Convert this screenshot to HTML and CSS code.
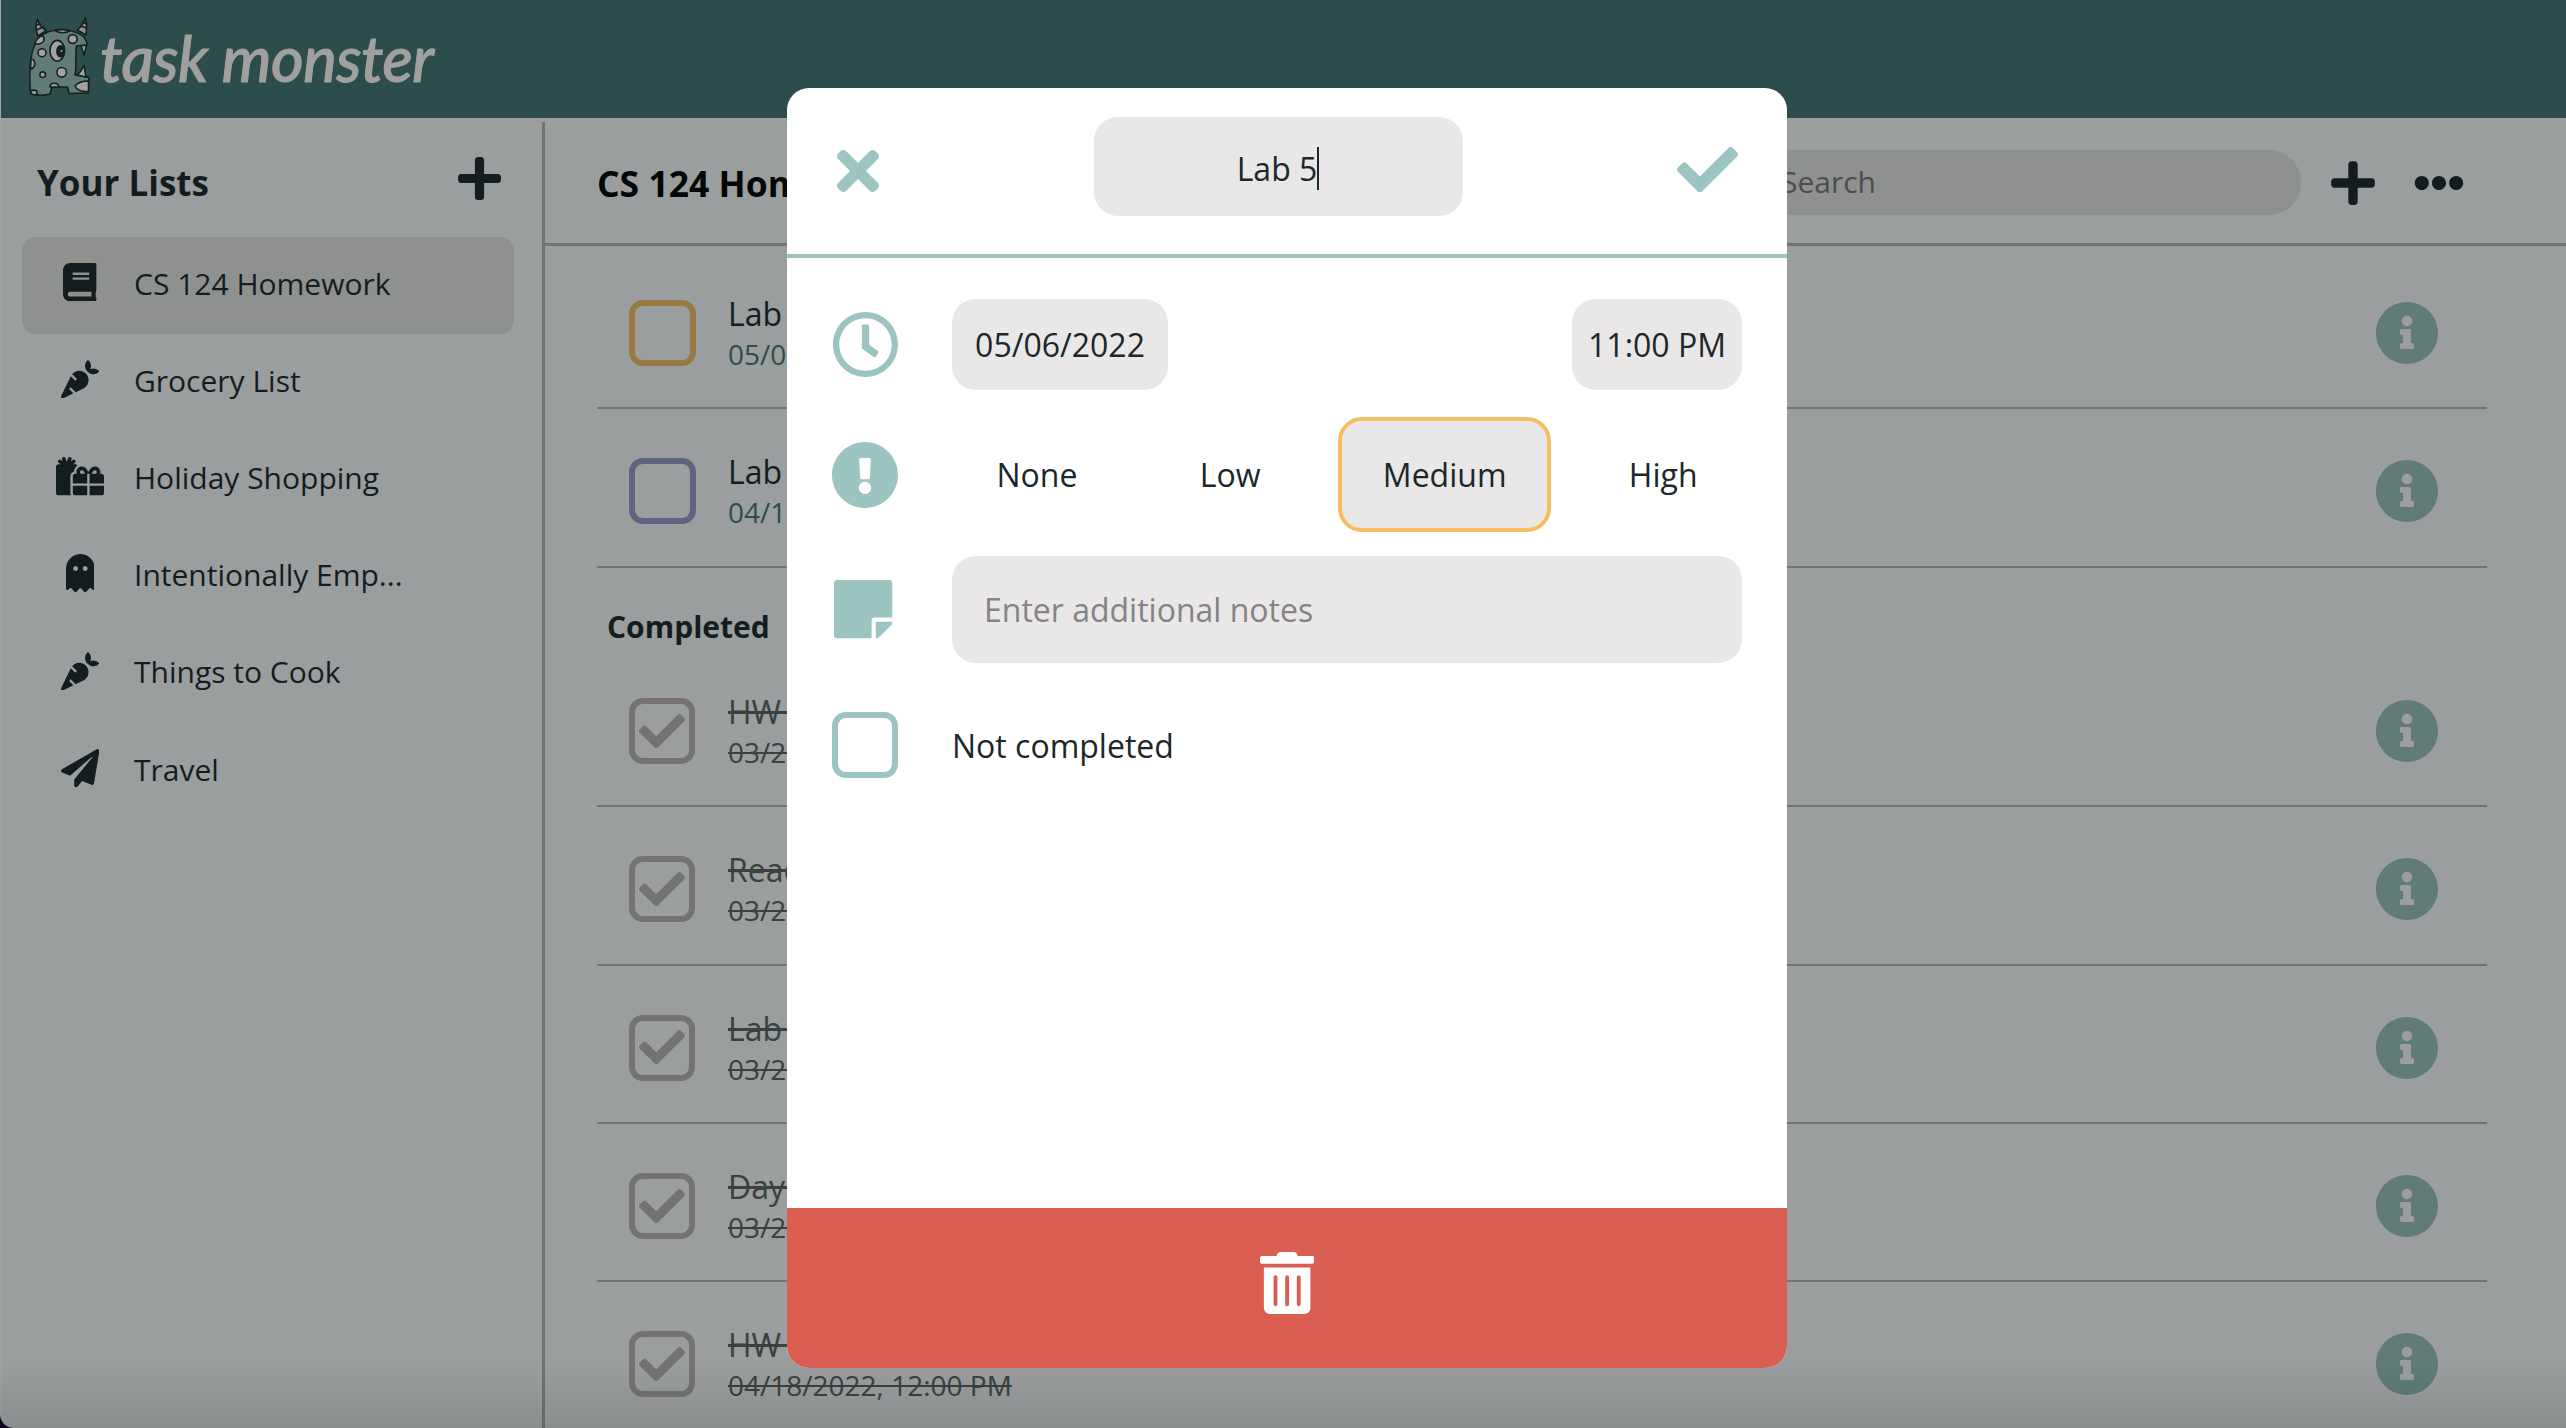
FILE: index.html
```html
<!DOCTYPE html>
<html lang="en">
<head>
<meta charset="utf-8">
<title>Task Monster</title>
<link rel="stylesheet" href="styles.css">
</head>
<body>
<svg class="sprite" aria-hidden="true">
  <symbol id="book" viewBox="0 0 448 512"><path d="M448 360V24c0-13.3-10.7-24-24-24H96C43 0 0 43 0 96v320c0 53 43 96 96 96h328c13.3 0 24-10.7 24-24v-16c0-7.5-3.5-14.3-8.9-18.7-4.2-15.4-4.2-59.3 0-74.7 5.4-4.3 8.9-11.1 8.9-18.6zM128 134c0-3.3 2.7-6 6-6h212c3.3 0 6 2.7 6 6v20c0 3.3-2.7 6-6 6H134c-3.3 0-6-2.7-6-6v-20zm0 64c0-3.3 2.7-6 6-6h212c3.3 0 6 2.7 6 6v20c0 3.3-2.7 6-6 6H134c-3.3 0-6-2.7-6-6v-20zm253.4 250H96c-17.7 0-32-14.3-32-32 0-17.6 14.4-32 32-32h285.4c-1.9 17.1-1.9 46.9 0 64z"/></symbol>
  <symbol id="carrot" viewBox="0 0 512 512"><path d="M298.2 156.6c-52.7-25.7-114.5-10.5-150.2 32.8l55.2 55.2c6.3 6.3 6.3 16.4 0 22.6-3.1 3.1-7.2 4.7-11.3 4.7s-8.2-1.6-11.3-4.7L130.4 217 2.3 479.7c-2.9 6-3.1 13.3 0 19.7 5.4 11.1 18.9 15.7 30 10.3l133.6-65.2-49.2-49.2c-6.3-6.2-6.3-16.4 0-22.6 6.3-6.2 16.4-6.2 22.6 0l57 57 102-49.8c24-11.7 44.5-31.3 57.1-57.1 30.1-61.7 4.5-136.1-57.2-166.2zm92.1-34.9C409.8 81 399.7 32.9 360 0c-50.3 41.7-52.5 107.5-7.9 151.9l8 8c44.4 44.6 110.3 42.4 151.9-7.9-32.9-39.7-81-49.8-121.7-30.3z"/></symbol>
  <symbol id="gifts" viewBox="0 0 640 512"><path d="M240.6 194.1c1.9-30.8 17.3-61.2 44-79.8C279.4 103.5 268.7 96 256 96h-29.4l30.7-22c7.2-5.1 8.9-15.1 3.7-22.3l-9.3-13c-5.1-7.2-15.1-8.9-22.3-3.7l-32 22.9 11.5-30.6c3.1-8.3-1.1-17.5-9.4-20.6l-15-5.6c-8.3-3.1-17.5 1.1-20.6 9.4l-19.9 53-19.9-53.1C121 2.1 111.8-2.1 103.5 1l-15 5.6C80.2 9.7 76 19 79.2 27.2l11.5 30.6L58.6 35c-7.2-5.1-17.2-3.5-22.3 3.7l-9.3 13c-5.1 7.2-3.5 17.2 3.7 22.3l30.7 22H32c-17.7 0-32 14.3-32 32v352c0 17.7 14.3 32 32 32h168.9c-5.5-9.5-8.9-20.3-8.9-32V256c0-29.9 20.8-55 48.6-61.9zM224 480c0 17.7 14.3 32 32 32h160V384H224v96zm224 32h160c17.7 0 32-14.3 32-32v-96H448v128zm160-288h-20.4c2.6-7.6 4.4-15.5 4.4-23.8 0-35.5-27-72.2-72.1-72.2-48.1 0-75.9 47.7-87.9 75.3-12.1-27.6-39.9-75.3-87.9-75.3-45.1 0-72.1 36.7-72.1 72.2 0 8.3 1.7 16.2 4.4 23.8H256c-17.7 0-32 14.3-32 32v96h192V224h15.3l.7-.2.7.2H448v128h192v-96c0-17.7-14.3-32-32-32zm-272 0c-2.7-1.4-5.1-3-7.2-4.8-7.3-6.4-8.8-13.8-8.8-19 0-9.7 6.4-24.2 24.1-24.2 18.7 0 35.6 27.4 44.5 48H336zm199.2-4.8c-2.1 1.8-4.5 3.4-7.2 4.8h-52.6c8.8-20.3 25.8-48 44.5-48 17.7 0 24.1 14.5 24.1 24.2 0 5.2-1.5 12.6-8.8 19z"/></symbol>
  <symbol id="ghost" viewBox="0 0 384 512"><path d="M186.1.09C81.01 3.24 0 94.92 0 200.05v263.92c0 14.26 17.23 21.39 27.31 11.31l24.92-18.53c6.66-4.95 16-3.99 21.51 2.21l42.95 48.35c6.25 6.25 16.38 6.25 22.63 0l40.72-45.85c6.37-7.17 17.56-7.17 23.92 0l40.72 45.85c6.25 6.25 16.38 6.25 22.63 0l42.95-48.35c5.51-6.2 14.85-7.17 21.51-2.21l24.92 18.53c10.08 10.08 27.31 2.94 27.31-11.31V192C384 84 294.83-3.17 186.1.09zM128 224c-17.67 0-32-14.33-32-32s14.33-32 32-32 32 14.33 32 32-14.33 32-32 32zm128 0c-17.67 0-32-14.33-32-32s14.33-32 32-32 32 14.33 32 32-14.33 32-32 32z"/></symbol>
  <symbol id="plane" viewBox="0 0 512 512"><path d="M476 3.2L12.5 270.6c-18.1 10.4-15.8 35.6 2.2 43.2L121 358.4l287.3-253.2c5.5-4.9 13.3 2.6 8.6 8.3L176 407v80.5c0 23.6 28.5 32.9 42.5 15.8L282 426l124.6 52.2c14.2 6 30.4-2.9 33-18.2l72-432C515 7.8 493.3-6.8 476 3.2z"/></symbol>
  <symbol id="plus" viewBox="0 0 448 512"><path d="M416 208H272V64c0-17.67-14.33-32-32-32h-32c-17.67 0-32 14.33-32 32v144H32c-17.67 0-32 14.33-32 32v32c0 17.67 14.33 32 32 32h144v144c0 17.67 14.33 32 32 32h32c17.67 0 32-14.33 32-32V304h144c17.67 0 32-14.33 32-32v-32c0-17.67-14.33-32-32-32z"/></symbol>
  <symbol id="dots" viewBox="0 0 512 512"><path d="M328 256c0 39.8-32.2 72-72 72s-72-32.2-72-72 32.2-72 72-72 72 32.2 72 72zm104-72c-39.8 0-72 32.2-72 72s32.2 72 72 72 72-32.2 72-72-32.2-72-72-72zm-352 0c-39.8 0-72 32.2-72 72s32.2 72 72 72 72-32.2 72-72-32.2-72-72-72z"/></symbol>
  <symbol id="info" viewBox="8 8 496 496"><path d="M256 8C119.043 8 8 119.083 8 256c0 136.997 111.043 248 248 248s248-111.003 248-248C504 119.083 392.957 8 256 8zm0 110c23.196 0 42 18.804 42 42s-18.804 42-42 42-42-18.804-42-42 18.804-42 42-42zm56 254c0 6.627-5.373 12-12 12h-88c-6.627 0-12-5.373-12-12v-24c0-6.627 5.373-12 12-12h12v-64h-12c-6.627 0-12-5.373-12-12v-24c0-6.627 5.373-12 12-12h64c6.627 0 12 5.373 12 12v100h12c6.627 0 12 5.373 12 12v24z"/></symbol>
  <symbol id="check" viewBox="0 65 512 382"><path d="M173.898 439.404l-166.4-166.4c-9.997-9.997-9.997-26.206 0-36.204l36.203-36.204c9.997-9.998 26.207-9.998 36.204 0L192 312.69 432.095 72.596c9.997-9.997 26.207-9.997 36.204 0l36.203 36.204c9.997 9.997 9.997 26.206 0 36.204l-294.4 294.401c-9.998 9.997-26.207 9.997-36.204-.001z"/></symbol>
  <symbol id="times" viewBox="0 80 352 352"><path d="M242.72 256l100.07-100.07c12.28-12.28 12.28-32.19 0-44.48l-22.24-22.24c-12.28-12.28-32.19-12.28-44.48 0L176 189.28 75.93 89.21c-12.28-12.28-32.19-12.28-44.48 0L9.21 111.45c-12.28 12.28-12.28 32.19 0 44.48L109.28 256 9.21 356.07c-12.28 12.28-12.28 32.19 0 44.48l22.24 22.24c12.28 12.28 32.2 12.28 44.48 0L176 322.72l100.07 100.07c12.28 12.28 32.2 12.28 44.48 0l22.24-22.24c12.28-12.28 12.28-32.19 0-44.48L242.72 256z"/></symbol>
  <symbol id="clock" viewBox="8 8 496 496"><path d="M256 8C119 8 8 119 8 256s111 248 248 248 248-111 248-248S393 8 256 8zm0 448c-110.5 0-200-89.5-200-200S145.5 56 256 56s200 89.5 200 200-89.5 200-200 200zm61.8-104.4l-84.9-61.7c-3.1-2.3-4.9-5.9-4.9-9.7V116c0-6.6 5.4-12 12-12h32c6.6 0 12 5.4 12 12v141.7l66.8 48.6c5.4 3.9 6.5 11.4 2.6 16.8L334.6 349c-3.9 5.3-11.4 6.5-16.8 2.6z"/></symbol>
  <symbol id="priority" viewBox="8 8 496 496"><path d="M504 256c0 136.997-111.043 248-248 248S8 392.997 8 256C8 119.083 119.043 8 256 8s248 111.083 248 248zm-248 50c-25.405 0-46 20.595-46 46s20.595 46 46 46 46-20.595 46-46-20.595-46-46-46zm-43.673-165.346l7.418 136c.347 6.364 5.609 11.346 11.982 11.346h48.546c6.373 0 11.635-4.982 11.982-11.346l7.418-136c.375-6.874-5.098-12.654-11.982-12.654h-63.383c-6.884 0-12.356 5.78-11.981 12.654z"/></symbol>
  <symbol id="note" viewBox="0 32 448 448"><path d="M312 320h136V56c0-13.3-10.7-24-24-24H24C10.7 32 0 42.7 0 56v400c0 13.3 10.7 24 24 24h264V344c0-13.2 10.8-24 24-24zm129 55l-98 98c-4.5 4.5-10.6 7-17 7h-6V352h128v6.1c0 6.3-2.5 12.4-7 16.9z"/></symbol>
  <symbol id="trash" viewBox="0 0 448 512"><path d="M32 464a48 48 0 0 0 48 48h288a48 48 0 0 0 48-48V128H32zm272-256a16 16 0 0 1 32 0v224a16 16 0 0 1-32 0zm-96 0a16 16 0 0 1 32 0v224a16 16 0 0 1-32 0zm-96 0a16 16 0 0 1 32 0v224a16 16 0 0 1-32 0zM432 32H312l-9.4-18.7A24 24 0 0 0 281.1 0H166.8a23.72 23.72 0 0 0-21.4 13.3L136 32H16A16 16 0 0 0 0 48v32a16 16 0 0 0 16 16h416a16 16 0 0 0 16-16V48a16 16 0 0 0-16-16z"/></symbol>
</svg>

<div class="app">
  <header class="topbar">
    <svg class="monster" viewBox="0 0 62 86">
      <g stroke="#14211f" stroke-width="1.6" stroke-linejoin="round" stroke-linecap="round">
        <path fill="#8f9191" d="M9.300 4c1.500 6 5 9 9 11.500L10 21C7.500 15 7.500 9 9.300 4zM57.300 2.500c1.500 6 1.500 12 .5 17.500l-8.500-5c4-3 6.500-7 8-12.500z"/>
        <path fill="none" d="M8.500 10l4-1M8.500 15l6.500-3M52.500 11l6 2M54.500 7.500l4 1"/>
        <path fill="#617b78" d="M2.500 78C1 60 2 40 7 29c6-12 17-14.500 27-14 13 .3 25 5 25 15l-10.500 1C47 40 49 50 47 60l14 2.500L60 78l-19 .5-1.500-6.500H24l-2 7c-6 1.500-14 1.500-19.500-1z"/>
        <path fill="#a2a2a2" d="M27 15.500c4-1 10-1 15 0-4 3-11 3-15 0zM6.500 29c2-5 5-8 8.500-8 3 5-1 9-8.500 8zM3 44c5 0 5 9-.5 10zM22 72c0-5 8-5 9 0zM3 76c4-2 8 0 5 4l-5-1zM47 71c3-4 8-5 13.500-5v10.500C54 77 49 75 47 71zM53 30.500h5.500L56 40zM49.500 60c3-3 5-6 6.500-9.500L58 62z"/>
        <g fill="#a2a2a2">
          <circle cx="44.700" cy="24" r="4.400"/>
          <circle cx="14" cy="37.700" r="4"/>
          <circle cx="14.700" cy="59.700" r="2.800"/>
          <circle cx="33.700" cy="57.300" r="4.800"/>
          <ellipse cx="29.300" cy="35.700" rx="7.300" ry="10.300"/>
        </g>
        <ellipse cx="32.500" cy="36.300" rx="3.600" ry="5.500" fill="#14211f"/>
        <circle cx="33.500" cy="36" r="1" fill="#a2a2a2" stroke="none"/>
      </g>
    </svg>
    <span class="wordmark">task monster</span>
  </header>
  <div class="columns">
    <nav class="sidebar">
      <div class="sidebar-head"><h2>Your Lists</h2><svg><use href="#plus"/></svg></div>
      <ul class="lists">
        <li class="active"><span class="glyph"><svg viewBox="0 0 448 512"><use href="#book"/></svg></span>CS 124 Homework</li>
        <li><span class="glyph"><svg viewBox="0 0 512 512"><use href="#carrot"/></svg></span>Grocery List</li>
        <li><span class="glyph"><svg viewBox="0 0 640 512"><use href="#gifts"/></svg></span>Holiday Shopping</li>
        <li><span class="glyph"><svg viewBox="0 0 384 512"><use href="#ghost"/></svg></span>Intentionally Emp...</li>
        <li><span class="glyph"><svg viewBox="0 0 512 512"><use href="#carrot"/></svg></span>Things to Cook</li>
        <li><span class="glyph"><svg viewBox="0 0 512 512"><use href="#plane"/></svg></span>Travel</li>
      </ul>
    </nav>
    <main class="content">
      <div class="content-head">
        <h1>CS 124 Homework</h1>
        <div class="search">Search</div>
        <svg class="add"><use href="#plus"/></svg>
        <svg class="more"><use href="#dots"/></svg>
      </div>
      <div class="tasks">
        <div class="task"><span class="box medium"></span><div class="text"><p>Lab 5</p><small>05/06/2022, 11:00 PM</small></div><svg class="info"><use href="#info"/></svg></div>
        <div class="task"><span class="box low"></span><div class="text"><p>Lab 4</p><small>04/18/2022, 11:00 PM</small></div><svg class="info"><use href="#info"/></svg></div>
        <h3>Completed</h3>
        <div class="task done"><span class="box"><svg><use href="#check"/></svg></span><div class="text"><p>HW 2</p><small>03/28/2022, 12:00 PM</small></div><svg class="info"><use href="#info"/></svg></div>
        <div class="task done"><span class="box"><svg><use href="#check"/></svg></span><div class="text"><p>Reading</p><small>03/28/2022, 12:00 PM</small></div><svg class="info"><use href="#info"/></svg></div>
        <div class="task done"><span class="box"><svg><use href="#check"/></svg></span><div class="text"><p>Lab 3</p><small>03/28/2022, 12:00 PM</small></div><svg class="info"><use href="#info"/></svg></div>
        <div class="task done"><span class="box"><svg><use href="#check"/></svg></span><div class="text"><p>Day 1</p><small>03/28/2022, 12:00 PM</small></div><svg class="info"><use href="#info"/></svg></div>
        <div class="task done"><span class="box"><svg><use href="#check"/></svg></span><div class="text"><p>HW 3</p><small>04/18/2022, 12:00 PM</small></div><svg class="info"><use href="#info"/></svg></div>
      </div>
    </main>
  </div>
</div>
<div class="dock-shade"></div>
<div class="corner"></div>

<section class="modal">
  <header class="modal-head">
    <svg class="close"><use href="#times"/></svg>
    <div class="field name">Lab 5<i class="caret"></i></div>
    <svg class="confirm"><use href="#check"/></svg>
  </header>
  <div class="modal-body">
    <div class="row when"><span class="lead"><svg class="i-clock"><use href="#clock"/></svg></span><div class="values"><span class="field">05/06/2022</span><span class="field time">11:00 PM</span></div></div>
    <div class="row level"><span class="lead"><svg class="i-priority"><use href="#priority"/></svg></span><div class="values"><span class="choice">None</span><span class="choice">Low</span><span class="choice picked">Medium</span><span class="choice">High</span></div></div>
    <div class="row notes"><span class="lead"><svg class="i-note"><use href="#note"/></svg></span><div class="field memo">Enter additional notes</div></div>
    <div class="row status"><span class="lead"><span class="box"></span></span><span>Not completed</span></div>
  </div>
  <footer class="modal-foot"><svg><use href="#trash"/></svg></footer>
</section>
</body>
</html>
```
FILE: styles.css
```css
* { box-sizing: border-box; }
html, body { height: 100%; }
body {
  margin: 0;
  overflow: hidden;
  background: #9a9e9e;
  color: #141d1e;
  font-family: "Open Sans", "Noto Sans", sans-serif;
  font-size: 32px;
}
h1, h2, h3, p, ul { margin: 0; padding: 0; }
svg { display: block; fill: currentColor; flex: none; }
.sprite { position: absolute; width: 0; height: 0; }

.app { display: flex; flex-direction: column; height: 1428px; overflow: hidden; border-left: 1px solid rgba(255, 255, 255, .08); }
.topbar { display: flex; flex: none; height: 118px; padding-left: 27px; background: #2c4d4c; }
.monster { width: 62px; height: 86px; margin-top: 15px; }
.wordmark {
  margin: 8px 0 0 10px;
  color: #a0a0a0;
  font: italic 500 63px/100px Lato, sans-serif;
  letter-spacing: -.5px;
  white-space: nowrap;
  -webkit-text-stroke: 1px #a0a0a0;
}
.columns { display: flex; flex: 1; min-height: 0; padding-top: 4px; }

.sidebar { flex: none; width: 544px; border-right: 3px solid #747274; }
.sidebar-head { display: flex; justify-content: space-between; height: 115px; padding: 31px 41px 0 36px; }
.sidebar-head h2 { font-size: 35px; line-height: 60px; }
.sidebar-head svg { width: 43px; height: 49px; margin-top: 1px; }
.lists { display: flex; flex-direction: column; padding: 0 28px 0 21px; list-style: none; }
.lists li { display: flex; align-items: center; height: 97.2px; padding-bottom: 5px; border-radius: 14px; font-size: 30px; }
.lists .active { background: #8f918f; }
.glyph { display: flex; justify-content: center; width: 116px; margin: 0 -4px 2px 0; }
.glyph svg { height: 38.4px; }

.content { flex: 1; min-width: 0; }
.content-head { display: flex; align-items: center; height: 124px; padding: 0 102px 0 52px; border-bottom: 3px solid #747274; }
.content-head h1 { margin-right: auto; color: #050606; font-size: 35.5px; }
.search { width: 581px; height: 65px; padding-left: 61px; border-radius: 32px; background: #8f918f; color: #4c4e4e; font-size: 30px; line-height: 64px; }
.add { width: 44px; height: 50px; margin-left: 30px; }
.more { width: 50px; height: 50px; margin-left: 39px; }

.tasks { padding: 5px 79px 0 52px; }
.task { display: flex; align-items: center; height: 158.25px; padding: 8px 49px 0 32px; border-bottom: 2px solid #747274; }
.box { display: flex; flex: none; align-items: center; justify-content: center; width: 66px; height: 66px; border: 6px solid #747274; border-radius: 14px; color: #747274; }
.box.medium { width: 67px; border-color: #997a42; }
.box.low { width: 67px; border-color: #60657f; }
.box svg { width: 46px; height: 34.3px; }
.text { flex: 1; margin: 2px 0 0 33px; line-height: 40px; }
.box.medium + .text, .box.low + .text { margin-left: 32px; }
.text small { display: block; color: #2c4d4a; font-size: 28px; }
.info { width: 62px; height: 62px; color: #607b78; }
.done .text p, .done .text small { width: max-content; color: #39423f; text-decoration: line-through; }
.tasks h3 { height: 81.5px; padding-left: 10px; font-size: 30px; line-height: 117px; }

.dock-shade { position: absolute; inset: auto 0 0 0; height: 68px; background: linear-gradient(rgba(0, 0, 0, 0), rgba(0, 0, 0, .1)); }
.corner { position: absolute; left: 0; bottom: 0; width: 14px; height: 14px; background: radial-gradient(circle at 14px 0, rgba(0, 0, 0, 0) 13.5px, #0c0420 14.5px); }

.modal {
  position: absolute;
  left: 787px;
  top: 88px;
  display: flex;
  flex-direction: column;
  width: 1000px;
  height: 1280px;
  overflow: hidden;
  border-radius: 22px;
  background: #fff;
  color: #1b2729;
}
.modal-head { display: flex; align-items: center; justify-content: space-between; height: 170px; padding: 0 49px 1px 50px; border-bottom: 4px solid #9cc4c1; color: #9cc4c1; }
.close { width: 42px; height: 42px; }
.confirm { width: 61px; height: 45.5px; margin-top: -1px; }
.field { display: block; border-radius: 24px; background: #eae7e8; color: #1b2729; }
.name { display: flex; align-items: center; justify-content: center; width: 369px; height: 99px; margin: -8px 0 0; padding-top: 4px; }
.caret { width: 2px; height: 43px; background: #1b2729; }
.modal-body { display: flex; flex: 1; flex-direction: column; padding: 41px 45px 0; }
.row { display: flex; align-items: center; }
.lead { flex: none; width: 120px; color: #9cc4c1; }
.values { display: flex; flex: 1; justify-content: space-between; }
.i-clock { width: 65px; height: 65px; margin-left: 1px; }
.i-priority { width: 66px; height: 66px; }
.i-note { width: 58.5px; height: 58.5px; margin-left: 2px; }
.when .field { width: 216px; height: 91px; line-height: 91px; text-align: center; }
.when .time { width: 170px; }
.level { margin-top: 27px; }
.choice { height: 115px; padding: 0 40.5px; border: 4px solid transparent; border-radius: 24px; line-height: 107px; }
.picked { border-color: #f6be61; background: #eae7e8; }
.notes { margin-top: 24px; }
.memo { flex: 1; height: 107px; padding-left: 32px; color: #858384; line-height: 107px; }
.status { margin-top: 49px; }
.lead .box { border-color: #9cc4c1; }
.modal-foot { display: flex; align-items: center; justify-content: center; height: 160px; padding-bottom: 10px; background: #da5f52; color: #fff; }
.modal-foot svg { width: 54.25px; height: 62px; }
```
